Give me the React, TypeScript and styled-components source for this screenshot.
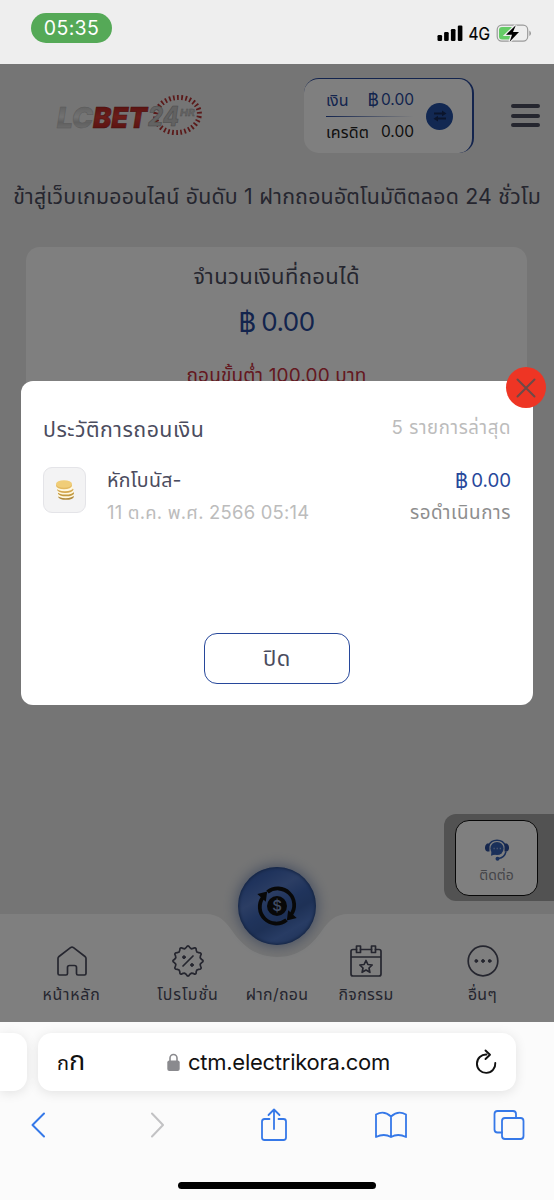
import React from "react";
import styled, { createGlobalStyle } from "styled-components";

const Global = createGlobalStyle`
  * { box-sizing: border-box; }
  body { margin: 0; font-family: Inter, "Noto Sans Thai", "Noto Sans Thai Looped", Loma, sans-serif; }
`;

const Screen = styled.div`
  width: 554px;
  height: 1200px;
  display: flex;
  flex-direction: column;
  overflow: hidden;
`;

const Text = styled.span<{ $size: number; $color?: string; $ls?: number; $lh?: number; $weight?: number }>`
  display: block;
  white-space: nowrap;
  font-size: ${(p) => p.$size}px;
  line-height: ${(p) => p.$lh ?? 28}px;
  color: ${(p) => p.$color ?? "#4b4c5e"};
  letter-spacing: ${(p) => p.$ls ?? 0}px;
  font-weight: ${(p) => p.$weight ?? 400};
`;

/* ---- phone status bar ---- */
const StatusBar = styled.div`
  flex: none;
  height: 64px;
  background: #eeeeee;
  display: flex;
  justify-content: space-between;
  align-items: flex-start;
  padding: 13px 23px 0 31px;
`;
const Clock = styled.div`
  width: 81px;
  height: 30px;
  border-radius: 15px;
  background: #55a957;
  display: flex;
  align-items: center;
  justify-content: center;
`;
const StatusIcons = styled.div`
  display: flex;
  align-items: center;
  height: 40px;
`;

/* ---- site ---- */
const Site = styled.div`
  position: relative;
  flex: none;
  height: 958px;
  background: #ebebeb;
  display: flex;
  flex-direction: column;
`;
const Header = styled.div`
  display: flex;
  align-items: flex-start;
  height: 101px;
  padding: 14px 14px 0 50px;
`;
const LogoWrap = styled.div`
  flex: 1;
  padding-top: 10px;
`;
const Balance = styled.div`
  width: 170px;
  height: 75px;
  border-radius: 15px;
  background: #fff;
  border-top: 1.5px solid #27489b;
  border-right: 2px solid #27489b;
  display: flex;
  align-items: center;
  padding: 0 19px 0 22px;
  justify-content: space-between;
`;
const BalanceRows = styled.div`
  width: 88px;
  display: flex;
  flex-direction: column;
`;
const BalanceRow = styled.div`
  display: flex;
  justify-content: space-between;
  align-items: center;
`;
const Rule = styled.div`
  height: 1px;
  margin: 2px 0 1px;
  background: linear-gradient(90deg, #27489b, #27489b00);
`;
const Swap = styled.div`
  width: 27px;
  height: 27px;
  border-radius: 50%;
  background: #2450a4;
  display: flex;
  align-items: center;
  justify-content: center;
`;
const Burger = styled.div`
  display: flex;
  flex-direction: column;
  gap: 5.7px;
  margin: 26px 0 0 37px;
  width: 29px;
`;
const BurgerBar = styled.i`
  height: 4px;
  border-radius: 2px;
  background: #4b4c5e;
`;
const Marquee = styled.div`
  height: 64px;
  margin: 0 13px;
  padding-top: 9px;
  overflow: hidden;
  display: flex;
  justify-content: flex-end;
`;
const Card = styled.div`
  margin: 18px 27px 0 26px;
  height: 320px;
  border-radius: 14px;
  background: #fff;
  display: flex;
  flex-direction: column;
  align-items: center;
  padding-top: 13px;
`;
const Money = styled.div<{ $gap: number }>`
  display: flex;
  align-items: center;
  gap: ${(p) => p.$gap}px;
`;
const Gap = styled.div<{ $h: number }>`
  flex: none;
  height: ${(p) => p.$h}px;
`;

const Contact = styled.div`
  position: absolute;
  right: 0;
  top: 750px;
  width: 110px;
  height: 87px;
  border-radius: 12px 0 0 12px;
  background: #a4a4a4;
  padding: 6px 16px 6px 11px;
`;
const ContactCard = styled.div`
  height: 76px;
  border: 1.3px solid #111;
  border-radius: 14px;
  background: #fff;
  display: flex;
  flex-direction: column;
  align-items: center;
  padding-top: 17px;
`;

const Nav = styled.nav`
  position: absolute;
  left: 0;
  bottom: 0;
  width: 554px;
  height: 108px;
`;
const NavShape = styled.svg`
  position: absolute;
  inset: 0;
`;
const NavItems = styled.div`
  position: relative;
  height: 108px;
  display: flex;
  padding: 31px 13px 0;
`;
const NavItem = styled.div<{ $w: number }>`
  width: ${(p) => p.$w}px;
  display: flex;
  flex-direction: column;
  align-items: center;
`;
const Fab = styled.div`
  position: absolute;
  left: 238px;
  top: -47px;
  width: 78px;
  height: 78px;
  border-radius: 50%;
  background: linear-gradient(150deg, #3459a4 0%, #4068ba 20%, #587cc8 36%, #4068b8 50%, #3c62ac 62%, #5078c8 76%, #3a60a8 100%);
  box-shadow: 0 0 14px 1px #3c5c9c99, inset 0 0 3px 1px #284884;
  display: flex;
  align-items: center;
  justify-content: center;
`;

/* ---- dialog ---- */
const Overlay = styled.div`
  position: absolute;
  inset: 0;
  background: rgba(0, 0, 0, 0.5);
  padding: 317px 21px 0;
`;
const Dialog = styled.div`
  position: relative;
  height: 324px;
  width: 512px;
  border-radius: 12px;
  background: #fff;
  padding: 33px 22px 0;
  display: flex;
  flex-direction: column;
`;
const CloseBadge = styled.div`
  position: absolute;
  right: -13px;
  top: -14px;
  width: 40px;
  height: 41px;
  border-radius: 50%;
  background: #ee3524;
  display: flex;
  align-items: center;
  justify-content: center;
`;
const DialogHead = styled.div`
  display: flex;
  justify-content: space-between;
`;
const Entry = styled.div`
  display: flex;
  margin-top: 22px;
`;
const CoinBox = styled.div`
  width: 43px;
  height: 46px;
  margin-top: 1px;
  border: 1px solid #e4e4e8;
  border-radius: 9px;
  background: #f3f3f4;
  display: flex;
  align-items: center;
  justify-content: center;
`;
const EntryText = styled.div`
  flex: 1;
  margin-left: 21px;
`;
const EntryAmount = styled.div`
  display: flex;
  flex-direction: column;
  align-items: flex-end;
`;
const CloseButton = styled.button`
  margin: 103px auto 0;
  width: 146px;
  height: 51px;
  padding: 0 0 2px;
  border: 1.5px solid #27489b;
  border-radius: 13px;
  background: #fff;
  font-family: inherit;
`;

/* ---- browser chrome ---- */
const Browser = styled.div`
  flex: none;
  height: 178px;
  background: #fbfbfb;
  display: flex;
  flex-direction: column;
  align-items: center;
`;
const AddressRow = styled.div`
  width: 554px;
  display: flex;
  gap: 11px;
  padding-top: 11px;
`;
const SideTab = styled.div`
  width: 27px;
  height: 58px;
  border-radius: 0 14px 14px 0;
  background: #fff;
  box-shadow: 0 2px 12px rgba(0, 0, 0, 0.1);
`;
const Address = styled.div`
  width: 478px;
  height: 58px;
  border-radius: 14px;
  background: #fff;
  box-shadow: 0 2px 12px rgba(0, 0, 0, 0.1);
  display: flex;
  align-items: center;
  justify-content: space-between;
  padding: 0 19px;
`;
const ReaderMark = styled.div`
  display: flex;
  align-items: baseline;
  width: 30px;
`;
const Url = styled.div`
  display: flex;
  align-items: center;
  gap: 8px;
  margin-right: 5px;
`;
const Tools = styled.div`
  width: 554px;
  height: 67px;
  display: flex;
  justify-content: space-between;
  align-items: center;
  padding: 0 28px 0 21px;
`;
const Tool = styled.div`
  width: 34px;
  display: flex;
  justify-content: center;
`;
const HomeBar = styled.div`
  width: 198px;
  height: 7px;
  margin-top: 24px;
  border-radius: 4px;
  background: #000;
`;

const ink = { fill: "none", stroke: "#4b4c5e", strokeWidth: 1.7, strokeLinecap: "round", strokeLinejoin: "round" } as const;
const blueLine = { fill: "none", stroke: "#3578e8", strokeWidth: 1.8, strokeLinecap: "round", strokeLinejoin: "round" } as const;

const Logo = () => (
  <svg width="160" height="56" viewBox="50 88 160 56" style={{ display: "block" }}>
    <defs>
      <linearGradient id="steel" x1="0" y1="0" x2="0" y2="1">
        <stop offset="0" stopColor="#b0b0b0" />
        <stop offset=".5" stopColor="#e6e6e6" />
        <stop offset=".65" stopColor="#c0c0c0" />
        <stop offset="1" stopColor="#f0f0f0" />
      </linearGradient>
      <linearGradient id="ruby" x1="0" y1="0" x2="0" y2="1">
        <stop offset="0" stopColor="#a01818" />
        <stop offset=".5" stopColor="#d83c34" />
        <stop offset="1" stopColor="#a81818" />
      </linearGradient>
    </defs>
    <ellipse cx="177.500" cy="115" rx="22" ry="17.500" transform="rotate(-8 177.500 115)" fill="none" stroke="#b43232" strokeWidth="5" strokeDasharray="1.7 2.366" pathLength="122" />
    <g fontFamily="Inter, sans-serif" fontStyle="italic" fontWeight="900" fontSize="29">
      <text x="57" y="127.500" textLength="36" lengthAdjust="spacingAndGlyphs" fill="url(#steel)" stroke="#b4b4b4" strokeWidth=".5">LC</text>
      <text x="93" y="127.500" textLength="54" lengthAdjust="spacingAndGlyphs" fill="url(#ruby)" stroke="#8c2020" strokeWidth=".5">BET</text>
      <text x="148" y="125.500" textLength="31" lengthAdjust="spacingAndGlyphs" fill="#c4c4c4" stroke="#999" strokeWidth=".6" fontSize="27" fontWeight="800">24</text>
      <text x="180" y="115.500" textLength="15" lengthAdjust="spacingAndGlyphs" fill="#c8c8c8" stroke="#999" strokeWidth=".3" fontSize="9" fontWeight="700">HR</text>
    </g>
  </svg>
);

const Signal = () => (
  <svg width="94" height="20" viewBox="436 23 94 20">
    <rect x="436.500" y="35" width="4.600" height="6" rx="1.200" />
    <rect x="443.100" y="32" width="4.600" height="9" rx="1.200" />
    <rect x="449.900" y="29" width="4.600" height="12" rx="1.200" />
    <rect x="456.800" y="25.500" width="4.600" height="15.500" rx="1.200" />
    <text x="467.500" y="39.600" fontSize="17" fontWeight="400" stroke="#000" strokeWidth=".2" textLength="21.500" lengthAdjust="spacingAndGlyphs" fontFamily="Inter, sans-serif">4G</text>
    <rect x="496.200" y="25.200" width="30.500" height="16" rx="4.600" fill="none" stroke="#9a9a9a" strokeWidth="1.200" />
    <path d="M528.300 30.500v5.500q1.700-.8 1.700-2.700T528.300 30.500z" fill="#9a9a9a" />
    <rect x="498" y="27" width="14.500" height="12.500" rx="3" fill="#65cc66" />
    <path d="M514.800 25.200 505 34.700h6l-2.300 7L518 32h-6z" stroke="#eee" strokeWidth="2.600" paintOrder="stroke" />
  </svg>
);

const Coins = () => (
  <svg width="20" height="22" viewBox="0 0 20 22">
    <ellipse cx="11" cy="17.800" rx="7.800" ry="3" fill="#b08a3c" />
    <ellipse cx="10.600" cy="16.200" rx="7.900" ry="3" fill="#fff8e0" />
    <ellipse cx="11" cy="14.200" rx="8" ry="3.100" fill="#c39a42" />
    <ellipse cx="10.600" cy="12.600" rx="8.100" ry="3" fill="#fff8e0" />
    <ellipse cx="10.200" cy="10.600" rx="8.200" ry="3.400" fill="#d4a850" />
    <ellipse cx="9.800" cy="8.900" rx="8.300" ry="3.300" fill="#fff8e0" />
    <ellipse cx="9" cy="6.400" rx="8" ry="3.900" fill="#e3b960" />
    <ellipse cx="9" cy="5" rx="8" ry="3.800" fill="#f0cd78" />
  </svg>
);

const Headset = () => (
  <svg width="26" height="24" viewBox="0 0 26 24">
    <path d="M4.500 8A9 8.500 0 0 1 21.500 8" fill="none" stroke="#3560b4" strokeWidth="1.600" />
    <path d="M5.500 5.500H3Q1 7 1 9v1.500q0 2 2 3h2.500zM20.500 5.500H23Q25 7 25 9v1.500q0 2-2 3h-2.500z" fill="#2c4f9c" />
    <circle cx="13" cy="10.500" r="6.600" fill="#3560b4" />
    <path d="M7.500 13.500 7 17.800l4-1.300z" fill="#3560b4" />
    <path d="M22 13.500c-1 4.500-4 6.500-7.500 7" fill="none" stroke="#3560b4" strokeWidth="1.500" />
    <circle cx="13.500" cy="20.800" r="2" fill="#3560b4" />
    <path d="M9.500 10.500h1.300m1.800 0h1.300m1.800 0H17" stroke="#9ab0e0" strokeWidth="1.300" />
  </svg>
);

const ExchangeIcon = () => (
  <svg width="42" height="42" viewBox="0 0 42 42">
    <circle cx="21" cy="21" r="10" fill="#111" />
    <g fill="none" stroke="#111" strokeWidth="3.800">
      <path d="M7.200 12A16.500 16.500 0 0 0 30.500 35" />
      <path d="M34.800 30A16.500 16.500 0 0 0 11.500 7" />
    </g>
    <path d="M1.300 9 11.200 6.500 9.800 16.800zM40.700 33 30.800 35.500 32.200 25.200z" fill="#111" />
    <text x="21" y="26.300" textAnchor="middle" fontFamily="Inter, sans-serif" fontWeight="500" fontSize="15" fill="#7f97c8">$</text>
  </svg>
);

const scallop = (() => {
  const n = 12;
  const step = (Math.PI * 2) / n;
  const pt = (r: number, t: number) => `${(16 + r * Math.cos(t)).toFixed(2)} ${(16 + r * Math.sin(t)).toFixed(2)}`;
  let d = `M${pt(12.6, -Math.PI / 2 - step / 2)}`;
  for (let i = 0; i < n; i++) {
    const a = i * step - Math.PI / 2;
    d += `Q${pt(13.4, a - step * 0.22)} ${pt(14.8, a - step * 0.1)}Q${pt(15.3, a)} ${pt(14.8, a + step * 0.1)}Q${pt(13.4, a + step * 0.22)} ${pt(12.6, a + step / 2)}`;
  }
  return d + "z";
})();

const navItems = [
  {
    label: "หน้าหลัก", w: 117, ls: 0.75,
    icon: <path d="M3 11.500 14.500 2.600q1.500-1 3 0L29 11.500q1 .8 1 2V28.500q0 1.500-1.500 1.500H22q-1.500 0-1.500-1.500V22.500q0-2-2-2h-5q-2 0-2 2V28.500q0 1.500-1.500 1.500H3.500Q2 30 2 28.500V13.500q0-1.200 1-2z" />,
  },
  {
    label: "โปรโมชั่น", w: 116, ls: 0.9,
    icon: (<><path d={scallop} /><path d="M21 11 11 21" /><circle cx="12" cy="12.200" r="1.400" fill="#4b4c5e" strokeWidth="1" /><circle cx="20" cy="20" r="1.400" fill="#4b4c5e" strokeWidth="1" /></>),
  },
  { label: "ฝาก/ถอน", w: 62, ls: 0.3, icon: null },
  {
    label: "กิจกรรม", w: 116, ls: 0.4,
    icon: (<><path d="M6.500 4.500H3q-2 0-2 2V29q0 2 2 2h26q2 0 2-2V6.500q0-2-2-2H25.500M10.500 4.500h11M1 12h30" /><rect x="6.500" y="1" width="4" height="6.500" /><rect x="21.500" y="1" width="4" height="6.500" /><path d="m16 15.500 1.900 4 4.300.5-3.200 3 .9 4.300-3.900-2.200-3.900 2.200.9-4.300-3.200-3 4.300-.5z" /></>),
  },
  {
    label: "อื่นๆ", w: 117, ls: 0.3,
    icon: (<><circle cx="16" cy="16" r="14.800" /><g fill="#4b4c5e" strokeWidth="1"><circle cx="9.300" cy="16" r="1.400" /><circle cx="16" cy="16" r="1.400" /><circle cx="22.700" cy="16" r="1.400" /></g></>),
  },
];

export default function App() {
  return (
    <Screen>
      <Global />
      <StatusBar>
        <Clock><Text $size={19.5} $color="#fff" $ls={0.35}>05:35</Text></Clock>
        <StatusIcons><Signal /></StatusIcons>
      </StatusBar>

      <Site>
        <Header>
          <LogoWrap><Logo /></LogoWrap>
          <Balance>
            <BalanceRows>
              <BalanceRow>
                <Text $size={16} $color="#27489b">เงิน</Text>
                <Money $gap={2}>
                  <Text $size={17.5} $color="#27489b">฿</Text>
                  <Text $size={15.5} $color="#27489b">0.00</Text>
                </Money>
              </BalanceRow>
              <Rule />
              <BalanceRow>
                <Text $size={16} $color="#222" $ls={0.2}>เครดิต</Text>
                <Text $size={15.5} $color="#222">0.00</Text>
              </BalanceRow>
            </BalanceRows>
            <Swap>
              <svg width="14" height="12" viewBox="0 0 14 12" fill="#162a58">
                <path d="M1 2.500h8V.500L13.500 3.500 9 6.200V4.500H1zM13 7.500H5V5.800L.5 8.700 5 11.500v-2h8z" />
              </svg>
            </Swap>
          </Balance>
          <Burger><BurgerBar /><BurgerBar /><BurgerBar /></Burger>
        </Header>
        <Marquee>
          <Text $size={21.3} $lh={44} $ls={0.22}>ยินดีต้อนรับเข้าสู่เว็บเกมออนไลน์ อันดับ 1 ฝากถอนอัตโนมัติตลอด 24 ชั่วโม</Text>
        </Marquee>
        <Card>
          <Text $size={22} $lh={32} $ls={0.35}>จำนวนเงินที่ถอนได้</Text>
          <Gap $h={13} />
          <Money $gap={5}>
            <Text $size={27.5} $lh={34} $color="#27489b">฿</Text>
            <Text $size={26} $lh={34} $color="#27489b" $ls={-0.5}>0.00</Text>
          </Money>
          <Gap $h={22} />
          <Text $size={19} $lh={30} $ls={0.15} $color="#c83040">ถอนขั้นต่ำ 100.00 บาท</Text>
        </Card>

        <Contact>
          <ContactCard>
            <Headset />
            <Text $size={14} $lh={26} $color="#8a8a92">ติดต่อ</Text>
          </ContactCard>
        </Contact>

        <Nav>
          <NavShape width="554" height="108" viewBox="0 0 554 108">
            <path d="M0 0H205C220 0 226 8 233 18C243 32 256 43 277 43C298 43 311 32 321 18C328 8 334 0 349 0H554V108H0z" fill="#fff" />
          </NavShape>
          <NavItems>
            {navItems.map((n) => (
              <NavItem key={n.label} $w={n.w}>
                <svg width="32" height="32" viewBox="0 0 32 32" {...ink}>{n.icon}</svg>
                <Text $size={15.9} $lh={35} $ls={n.ls}>{n.label}</Text>
              </NavItem>
            ))}
          </NavItems>
          <Fab><ExchangeIcon /></Fab>
        </Nav>

        <Overlay>
          <Dialog>
            <CloseBadge>
              <svg width="20" height="20" viewBox="0 0 20 20" stroke="#6d4a48" strokeWidth="2" strokeLinecap="round">
                <path d="M1.500 1.500l17 17M18.500 1.500l-17 17" />
              </svg>
            </CloseBadge>
            <DialogHead>
              <Text $size={21.3} $lh={30} $ls={0.5}>ประวัติการถอนเงิน</Text>
              <Text $size={18.6} $lh={27} $ls={0.6} $color="#bcbcbc">5 รายการล่าสุด</Text>
            </DialogHead>
            <Entry>
              <CoinBox><Coins /></CoinBox>
              <EntryText>
                <Text $size={19.5} $lh={28} $ls={0.3}>หักโบนัส-</Text>
                <Text $size={18.4} $lh={36} $ls={0.24} $color="#bcbcbc">11 ต.ค. พ.ศ. 2566 05:14</Text>
              </EntryText>
              <EntryAmount>
                <Money $gap={3}>
                  <Text $size={20.5} $color="#27489b" $lh={29}>฿</Text>
                  <Text $size={18.7} $color="#27489b" $lh={29}>0.00</Text>
                </Money>
                <Text $size={18.8} $lh={35} $ls={0.6} $color="#8e8e8e">รอดำเนินการ</Text>
              </EntryAmount>
            </Entry>
            <CloseButton><Text $size={22} $ls={0.5}>ปิด</Text></CloseButton>
          </Dialog>
        </Overlay>
      </Site>

      <Browser>
        <AddressRow>
          <SideTab />
          <Address>
            <ReaderMark>
              <Text $size={20} $color="#111">ก</Text>
              <Text $size={27} $color="#111">ก</Text>
            </ReaderMark>
            <Url>
              <svg width="13" height="19" viewBox="0 0 13 19">
                <path d="M3 9V5a3.500 3.500 0 0 1 7 0v4" fill="none" stroke="#8a8a8e" strokeWidth="1.600" />
                <rect x="0.300" y="7.500" width="12.400" height="10.500" rx="2" fill="#8a8a8e" />
              </svg>
              <Text $size={22} $color="#111" $ls={-0.25}>ctm.electrikora.com</Text>
            </Url>
            <svg width="22" height="26" viewBox="0 0 22 26" fill="none" stroke="#111" strokeWidth="1.900" strokeLinecap="round" strokeLinejoin="round">
              <path d="M11.500 5.500A9.200 9.200 0 1 0 20.300 14M10.500 1.500l4.500 4.200-4.500 4.300" />
            </svg>
          </Address>
        </AddressRow>
        <Tools>
          <Tool><svg width="16" height="26" viewBox="0 0 16 26" {...blueLine} strokeWidth={2}><path d="M14 1.500 2.500 13 14 24.500" /></svg></Tool>
          <Tool><svg width="16" height="26" viewBox="-2 0 16 26" {...blueLine} strokeWidth={2} stroke="#c2c2c4"><path d="M2 1.500 13 13 2 24.500" /></svg></Tool>
          <Tool><svg width="28" height="34" viewBox="0 0 28 34" {...blueLine}><path d="M9.500 11H4.500Q2 11 2 13.500v16Q2 32 4.500 32h19q2.500 0 2.500-2.500v-16Q26 11 23.500 11h-5M14 21V2M8.500 7 14 1.500 19.500 7" /></svg></Tool>
          <Tool><svg width="34" height="28" viewBox="0 0 34 28" {...blueLine}><path d="M17 5.500Q10-1 2 3.500V26q8-4 15 0 7-4 15 0V3.500Q24-1 17 5.500V26" /></svg></Tool>
          <Tool><svg width="32" height="32" viewBox="0 0 32 32" {...blueLine}><rect x="9" y="9" width="21.500" height="21" rx="3" /><path d="M9 23.500H4.500q-3 0-3-3V5q0-3 3-3h15.500q3 0 3 3v4" /></svg></Tool>
        </Tools>
        <HomeBar />
      </Browser>
    </Screen>
  );
}
